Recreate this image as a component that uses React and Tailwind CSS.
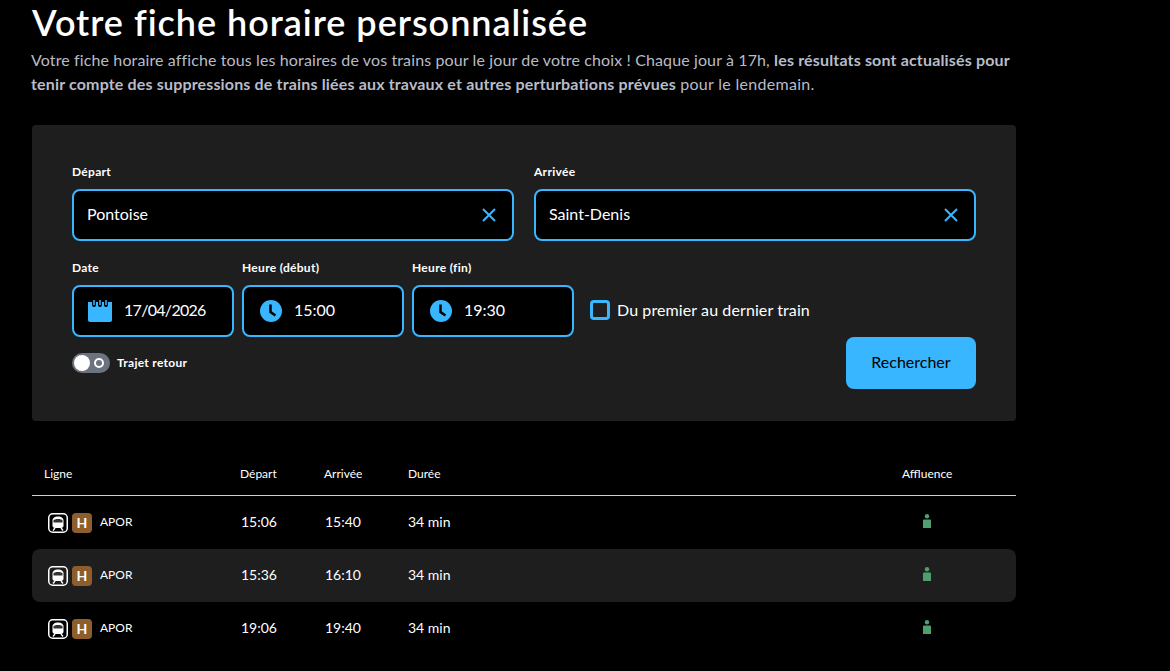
import React from 'react';

const font = "font-['Lato','Noto_Sans',sans-serif]";

const trains = [
  { dep: '15:06', arr: '15:40', alt: false },
  { dep: '15:36', arr: '16:10', alt: true },
  { dep: '19:06', arr: '19:40', alt: false },
];

const Cross = () => (
  <svg width="16" height="16" viewBox="0 0 16 16" fill="none" stroke="#38b6ff" strokeWidth="2">
    <path d="M2 2l12 12M14 2L2 14" />
  </svg>
);

const Clock = () => (
  <svg width="22" height="22" viewBox="0 0 22 22">
    <circle cx="11" cy="11" r="11" fill="#38b6ff" />
    <path d="M10.500 4.500v7.500l5 3.500" fill="none" stroke="#000" strokeWidth="2.500" />
  </svg>
);

const Calendar = () => (
  <svg width="24" height="23" viewBox="0 0 24 23">
    <path d="M0 2h24v18a2 2 0 0 1-2 2H2a2 2 0 0 1-2-2z" fill="#38b6ff" />
    <rect x="4" y="0" width="4" height="7" rx="2" fill="#000" />
    <rect x="10" y="0" width="4" height="7" rx="2" fill="#000" />
    <rect x="16" y="0" width="4" height="7" rx="2" fill="#000" />
    <path d="M6 0v5M12 0v5M18 0v5" stroke="#38b6ff" strokeWidth="1.500" />
  </svg>
);

const TrainIcon = () => (
  <svg width="20" height="20" viewBox="0 0 20 20" fill="none">
    <rect x="0.750" y="0.750" width="18.500" height="18.500" rx="4" stroke="#fff" strokeWidth="1.500" />
    <path d="M4.500 7.500C4.500 5 7 3.500 10 3.500s5.500 1.500 5.500 4v5c0 1.500-1 2.500-2.500 2.500H7c-1.500 0-2.500-1-2.500-2.500z" fill="#fff" />
    <path d="M5.500 7.500c.5-1 2-1.500 4.500-1.500s4 .5 4.500 1.500v2h-9z" fill="#333" />
    <path d="M7 15l-2 2.500M13 15l2 2.500" stroke="#fff" strokeWidth="1.300" />
  </svg>
);

const Person = () => (
  <svg width="8" height="14" viewBox="0 0 8 14" fill="#4f9e6f">
    <circle cx="4" cy="2.200" r="2.200" />
    <path d="M1 5.500h6a1 1 0 0 1 1 1V14H0V6.500a1 1 0 0 1 1-1z" />
  </svg>
);

const Label = ({ children }) => (
  <label className="block mb-[10px] text-xs leading-[14px] font-bold tracking-[0.3px] text-white">{children}</label>
);

const Row = ({ train }) => (
  <div className={`grid grid-cols-[196px_84px_84px_1fr_102px] items-center h-[53px] px-3 text-sm text-white rounded-lg ${train.alt ? 'bg-[#1e1e1e]' : ''}`}>
    <div className="flex items-center pl-1">
      <TrainIcon />
      <span className="ml-1 w-5 h-5 rounded bg-[#8d5e2c] flex items-center justify-center font-bold text-sm">H</span>
      <span className="ml-2 text-xs -mt-[2px]">APOR</span>
    </div>
    <span className="pl-px -mt-[2px]">{train.dep}</span>
    <span className="pl-px -mt-[2px]">{train.arr}</span>
    <span className="-mt-[2px]">34 min</span>
    <div className="pl-[21px] flex -mt-[4px]"><Person /></div>
  </div>
);

export default function App() {
  return (
    <div className={`${font} min-h-[671px] bg-black pl-8 overflow-hidden`}>
      <div className="w-[984px]">
        <h1 className="pt-[2px] text-4xl leading-[40px] font-semibold tracking-[0.98px] text-white">Votre fiche horaire personnalisée</h1>
        <p className="mt-[6px] -ml-px text-base leading-6 tracking-[0.12px] text-[#b8bcc8]">
          Votre fiche horaire affiche tous les horaires de vos trains pour le jour de votre choix ! Chaque jour à 17h, <strong className="font-bold tracking-[0.16px]">les résultats sont actualisés pour tenir compte des suppressions de trains liées aux travaux et autres perturbations prévues</strong> <span className="tracking-[0.3px]">pour le lendemain.</span>
        </p>

        <div className="mt-[29px] h-[296px] bg-[#1e1e1e] rounded p-10">
          <div className="grid grid-cols-2 gap-5">
            <div>
              <Label>Départ</Label>
              <div className="h-[52px] flex items-center justify-between pl-[13px] pr-[15px] bg-black border-2 border-[#38b6ff] rounded-lg text-white">
                <span className="-mt-[2px]">Pontoise</span>
                <Cross />
              </div>
            </div>
            <div>
              <Label>Arrivée</Label>
              <div className="h-[52px] flex items-center justify-between pl-[13px] pr-[15px] bg-black border-2 border-[#38b6ff] rounded-lg text-white">
                <span className="-mt-[2px]">Saint-Denis</span>
                <Cross />
              </div>
            </div>
          </div>

          <div className="flex gap-2 items-end mt-5">
            <div className="w-[162px]">
              <Label>Date</Label>
              <div className="h-[52px] flex items-center gap-3 px-[14px] bg-black border-2 border-[#38b6ff] rounded-lg text-white">
                <Calendar />
                <span className="tracking-[-0.7px] -mt-[2px]">17/04/2026</span>
              </div>
            </div>
            <div className="w-[162px]">
              <Label>Heure (début)</Label>
              <div className="h-[52px] flex items-center gap-3 px-4 bg-black border-2 border-[#38b6ff] rounded-lg text-white">
                <Clock />
                <span className="-mt-[2px]">15:00</span>
              </div>
            </div>
            <div className="w-[162px]">
              <Label>Heure (fin)</Label>
              <div className="h-[52px] flex items-center gap-3 px-4 bg-black border-2 border-[#38b6ff] rounded-lg text-white">
                <Clock />
                <span className="-mt-[2px]">19:30</span>
              </div>
            </div>
            <div className="ml-2 h-[52px] pb-[2px] flex items-center gap-[7px] tracking-[0.1px] text-white">
              <span className="w-5 h-5 border-[3px] border-[#38b6ff] rounded" />
              Du premier au dernier train
            </div>
          </div>

          <div className="flex items-start justify-between">
            <div className="flex items-center gap-[7px] mt-4">
              <div className="w-[38px] h-5 rounded-full bg-[#6b7280] flex items-center justify-between pl-[2px] pr-[6px]">
                <span className="w-4 h-4 rounded-full bg-white" />
                <span className="w-[10px] h-[10px] rounded-full border-2 border-white" />
              </div>
              <span className="text-xs font-bold tracking-[0.3px] text-white">Trajet retour</span>
            </div>
            <button className="h-[52px] w-[130px] pb-[2px] rounded-lg bg-[#38b6ff] text-black">Rechercher</button>
          </div>
        </div>

        <div className="mt-[30px]">
          <div className="grid grid-cols-[196px_84px_84px_1fr_102px] h-[45px] pt-[2px] items-center px-3 text-xs text-white border-b border-[#d0d0d0]">
            <span>Ligne</span>
            <span>Départ</span>
            <span>Arrivée</span>
            <span>Durée</span>
            <span>Affluence</span>
          </div>
          {trains.map((t) => (
            <Row key={t.dep} train={t} />
          ))}
        </div>
      </div>
    </div>
  );
}
